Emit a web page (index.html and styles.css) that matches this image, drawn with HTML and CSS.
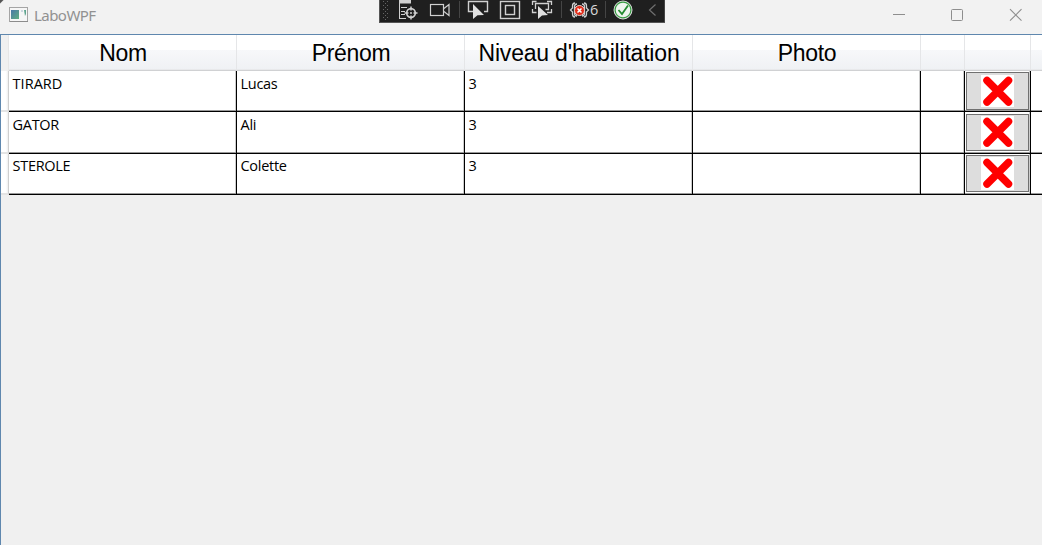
FILE: index.html
```html
<!DOCTYPE html>
<html lang="fr">
<head>
<meta charset="utf-8">
<title>LaboWPF</title>
<link rel="stylesheet" href="styles.css">
</head>
<body>
<div class="window">
  <header class="titlebar">
    <svg class="app-icon" width="20" height="16" viewBox="0 0 20 16">
      <defs><linearGradient id="g" x1="0" y1="0" x2="1" y2="1"><stop offset="0" stop-color="#4a78a8"/><stop offset="1" stop-color="#5fae80"/></linearGradient></defs>
      <rect x=".5" y=".5" width="18" height="14" fill="#f6f6f6" stroke="#a5a5a5"/>
      <path d="M1 14.5h18" stroke="#8c8c8c"/>
      <rect x="2" y="3" width="8" height="9" fill="url(#g)"/>
      <rect x="12" y="3" width="2" height="2" fill="#ccd8e0"/>
      <path d="M15 3h2v4l-1 2z" fill="#5fa58f"/>
    </svg>
    <span class="app-title">LaboWPF</span>
    <svg class="controls" width="131" height="14" viewBox="0 0 131 14" fill="none" stroke="#8e8e8e">
      <path d="M0 6.5h12"/>
      <rect x="58.5" y="1.5" width="11" height="11" rx="1"/>
      <path d="M117 1.2l11.5 11.5M128.500 1.2L117 12.700" stroke-width="1.1"/>
    </svg>
  </header>

  <main class="grid">
    <div class="row head">
      <div class="gutter"></div>
      <div class="cell wide">Nom</div><div class="cell wide">Prénom</div><div class="cell wide level">Niveau d'habilitation</div><div class="cell wide">Photo</div><div class="cell small"></div><div class="cell action"></div><div class="cell rest"></div>
    </div>
    <div class="row">
      <div class="gutter"></div>
      <div class="cell wide caps">TIRARD</div><div class="cell wide">Lucas</div><div class="cell wide">3</div><div class="cell wide"></div><div class="cell small"></div>
      <div class="cell action"><button class="delete"><svg width="33" height="32" viewBox="0 0 33 32"><path d="M6 5.500L27.500 27M27.500 5.500L6 27"/></svg></button></div><div class="cell rest"></div>
    </div>
    <div class="row tall">
      <div class="gutter"></div>
      <div class="cell wide">GATOR</div><div class="cell wide">Ali</div><div class="cell wide">3</div><div class="cell wide"></div><div class="cell small"></div>
      <div class="cell action"><button class="delete"><svg width="33" height="33" viewBox="0 0 33 33"><path d="M6 5.500L27.500 27M27.500 5.500L6 27"/></svg></button></div><div class="cell rest"></div>
    </div>
    <div class="row last">
      <div class="gutter"></div>
      <div class="cell wide">STEROLE</div><div class="cell wide">Colette</div><div class="cell wide">3</div><div class="cell wide"></div><div class="cell small"></div>
      <div class="cell action"><button class="delete"><svg width="33" height="33" viewBox="0 0 33 33"><path d="M6 5.500L27.500 27M27.500 5.500L6 27"/></svg></button></div><div class="cell rest"></div>
    </div>
  </main>

  <div class="debugbar">
    <svg width="286" height="23" viewBox="379 0 286 23" fill="none" stroke="#d0d0d0">
      <g stroke="#666" stroke-dasharray="1 3"><path d="M383.500 1v20M387.500 1v20"/><path d="M385.500 3v18"/></g>
      <path d="M399 1.500h12" stroke-width="4"/>
      <path d="M399.500 3v15M399 18.500h7M401 7.500h6M401 11.500h4M401 14.500h4"/>
      <circle cx="411" cy="13" r="4.300" stroke-width="1.700"/>
      <path d="M411 6.500v4M411 15.500v4M404.500 13h4M413.500 13h4" stroke-width="1.500"/>
      <circle cx="411" cy="13" r="1" fill="#d0d0d0" stroke="none"/>
      <rect x="430.500" y="4.500" width="13" height="11" stroke-width="1.200"/>
      <path d="M444 8.500l5-4v11l-5-4" stroke-width="1.200"/>
      <path d="M459.500 1v17M561.500 1v17M605.500 1v17" stroke="#454545"/>
      <path d="M473 11.500h-4.500V1.500h19v10H484" stroke-width="1.400"/>
      <path d="M473 4v15l4.500-3.700 6.500-.3z" fill="#e0e0e0" stroke="none"/>
      <rect x="500.500" y="1.500" width="19" height="17" stroke-width="1.400"/>
      <rect x="505.500" y="5.500" width="9" height="9" stroke-width="1.400"/>
      <path d="M532.500 5V1.500h4M547 1.500h4.500V5M532.500 9v3.500h4M547 12.500h4.500V9M535.500 9V3.500h13v6h-3" stroke-width="1.300"/>
      <path d="M538 6v13l4-3.500 6-.5z" fill="#e0e0e0" stroke="none"/>
      <path d="M575 3q-2.500 0-2.500 3v2l-2 2 2 2v2q0 3 2.500 3M577 4q-2.500 0-2.500 3v6q0 3 2.500 3M584 3q2.500 0 2.500 3v2l2 2-2 2v2q0 3-2.500 3M582 4q2.500 0 2.500 3v6q0 3-2.500 3" stroke-width="1.300"/>
      <circle cx="579.500" cy="10.500" r="5" fill="#e22c18" stroke="#e9d3cf"/>
      <path d="M577.500 8.500l4 4M581.500 8.500l-4 4" stroke="#fff" stroke-width="1.500"/>
      <circle cx="623" cy="10" r="9" fill="#eef5ee" stroke="#ddd"/>
      <circle cx="623" cy="10" r="7.900" stroke="#379b42" stroke-width="1.200"/>
      <path d="M618.500 10l3.500 4 6-8.500" stroke="#248b30" stroke-width="1.800"/>
      <path d="M655.500 4.500l-6 5.500 6 5.500" stroke="#707070" stroke-width="1.200"/>
    </svg>
    <span class="errors">6</span>
  </div>
</div>
</body>
</html>
```
FILE: styles.css
```css
* { box-sizing: border-box; }
body { margin: 0; background: #f0f0f0; overflow: hidden; }
.window {
  position: relative;
  width: 1042px;
  height: 545px;
  display: flex;
  flex-direction: column;
  overflow: hidden;
  font-family: "Open Sans", "Noto Sans", sans-serif;
}
.titlebar {
  display: flex;
  align-items: center;
  height: 34px;
  flex: none;
  padding: 0 18px 4px 9px;
  background: linear-gradient(135deg, #555 2px, #f2f2f2 3px);
}
.app-title {
  margin-left: 5px;
  font-family: "Noto Sans", sans-serif;
  font-size: 15px;
  letter-spacing: -0.55px;
  color: #919191;
}
.controls { margin-left: auto; }
.grid {
  flex: 1;
  border-top: 1px solid #5f87ae;
  border-left: 1px solid #5f87ae;
  background: #f0f0f0;
  overflow: hidden;
}
.row { display: flex; height: 41px; font-size: 14.5px; line-height: 20px; color: #000; }
.row.tall { height: 42px; }
.gutter {
  width: 8px;
  flex: none;
  background: linear-gradient(90deg, #fff 5px, #eee);
  border-right: 1px solid #cfcfcf;
  border-bottom: 2px solid #e4e4e4;
}
.cell {
  flex: none;
  padding: 3px 0 0 3.5px;
  background: #fff;
  border-right: 1px solid #000;
  border-bottom: 1px solid #000;
  box-shadow: inset 0 -1px #999, inset -1px 0 #ccc;
  letter-spacing: -0.28px;
}
.caps { letter-spacing: 0.05px; }
.wide { width: 228px; }
.small { width: 44px; }
.action { width: 66px; padding: 1px; }
.rest { width: 14px; }
.head { height: 36px; font: 23px/37px "Liberation Sans", Arial, sans-serif; }
.head .cell {
  padding: 0 0 0 1px;
  text-align: center;
  letter-spacing: -0.35px;
  background: linear-gradient(#fff 0 15px, #f7f8fa 15px, #eff1f4);
  border-right: 1px solid #e5e6e8;
  border-bottom: 1px solid #d0d1d3;
  box-shadow: inset 0 -1px #e8e9eb, 1px 0 #e9eaeb;
  position: relative;
}
.head .level { letter-spacing: -0.2px; }
.head .gutter { background: #f0f0f0; border-bottom: 0; border-right-color: #e6e6e6; }
.last .cell { padding-top: 2px; }
.delete {
  display: flex;
  align-items: center;
  justify-content: center;
  width: 63px;
  height: 38px;
  padding: 0;
  background: #ddd;
  border: 1px solid #707070;
}
.tall .action { padding-top: 2px; }
.tall .delete, .last .delete { height: 37px; }
.last .action { padding-top: 1px; }
.delete svg { background: #fff; stroke: #f00; stroke-width: 7.5px; stroke-linecap: round; }
.debugbar {
  position: absolute;
  left: 379px;
  top: 0;
  width: 286px;
  height: 23px;
  background: #1f1f1f;
  box-shadow: inset 1px -1px #555, inset -1px 0 #444;
}
.errors {
  position: absolute;
  left: 211px;
  top: 0;
  font-size: 14.5px;
  line-height: 20px;
  color: #d8d8d8;
}
```
